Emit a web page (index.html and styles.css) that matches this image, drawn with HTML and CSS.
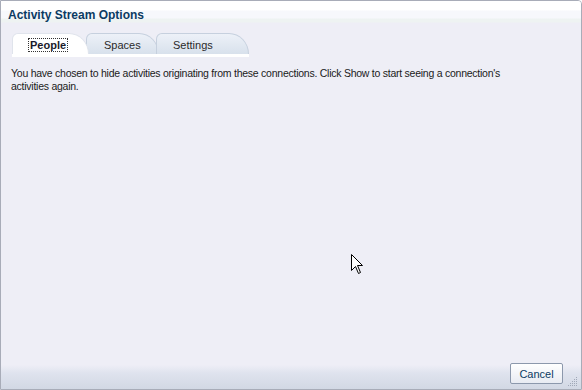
FILE: index.html
```html
<!DOCTYPE html>
<html lang="en">
<head>
    <meta charset="UTF-8">
    <title>Activity Stream Options</title>
    <link rel="stylesheet" href="styles.css">
</head>
<body>

<div class="dialog">
    <header class="title-bar">
        <span>Activity Stream Options</span>
    </header>

    <main class="content">
        <nav class="tabs">
            <div class="tab active people"><span>People</span></div>
            <div class="tab spaces">Spaces</div>
            <div class="tab settings">Settings</div>
        </nav>
        <p class="message">You have chosen to hide activities originating from these connections. Click Show to start seeing a connection's activities again.</p>
    </main>

    <footer class="button-bar">
        <button class="btn">Cancel</button>
        <svg class="grip" width="10" height="10" viewBox="0 0 10 10">
            <rect x="8" y="0" width="1" height="1" fill="#a0a8b8"/>
            <rect x="6" y="2" width="1" height="1" fill="#a0a8b8"/>
            <rect x="8" y="2" width="1" height="1" fill="#a0a8b8"/>
            <rect x="4" y="4" width="1" height="1" fill="#a0a8b8"/>
            <rect x="6" y="4" width="1" height="1" fill="#a0a8b8"/>
            <rect x="8" y="4" width="1" height="1" fill="#a0a8b8"/>
            <rect x="2" y="6" width="1" height="1" fill="#a0a8b8"/>
            <rect x="4" y="6" width="1" height="1" fill="#a0a8b8"/>
            <rect x="6" y="6" width="1" height="1" fill="#a0a8b8"/>
            <rect x="8" y="6" width="1" height="1" fill="#a0a8b8"/>
            <rect x="0" y="8" width="1" height="1" fill="#a0a8b8"/>
            <rect x="2" y="8" width="1" height="1" fill="#a0a8b8"/>
            <rect x="4" y="8" width="1" height="1" fill="#a0a8b8"/>
            <rect x="6" y="8" width="1" height="1" fill="#a0a8b8"/>
            <rect x="8" y="8" width="1" height="1" fill="#a0a8b8"/>
        </svg>
    </footer>

    <!-- mouse pointer captured in the screenshot -->
    <svg class="cursor" width="13" height="21" viewBox="0 0 13 21">
        <path d="M0.5 0.5 L0.5 16.5 L4.5 12.5 L7.5 19.5 L9.5 18.5 L6.5 11.5 L11.5 11.5 Z" fill="#fff" stroke="#000" stroke-width="1"/>
    </svg>
</div>

</body>
</html>
```

FILE: styles.css
```css
body {
    margin: 0;
    padding: 0;
    background-color: #ffffff;
    font-family: "Liberation Sans", Arial, sans-serif;
    font-size: 11px;
}
.dialog {
    position: relative;
    width: 580px;
    height: 388px;
    border: 1px solid #a8acb8;
    border-top-right-radius: 4px;
    background-color: #eeeef6;
    display: flex;
    flex-direction: column;
    overflow: hidden;
}
.title-bar {
    height: 27px;
    display: flex;
    align-items: center;
    padding-left: 7px;
    background: linear-gradient(#ffffff 0, #ffffff 9px, #f7f8fc 10px, #f7f8fc 17px, #eef3f2 18px, #eef3f2 21px, #eeeef6 22px);
    color: #0b3b63;
    font-weight: bold;
    font-size: 12px;
}
.content {
    flex: 1;
    padding: 5px 0 0 11px;
}
.tabs {
    display: flex;
    width: 237px;
    height: 21px;
    border-bottom: 3px solid #ffffff;
}
.tab {
    position: relative;
    height: 21px;
    line-height: 22px;
    color: #2a2a2a;
    background: linear-gradient(#edf1f8, #d8e1ec);
    border-top-left-radius: 6px;
    border-top-right-radius: 20px 21px;
    border: 1px solid #c6d0de;
    border-bottom: none;
    box-sizing: border-box;
    margin-right: -3px;
}
.tab.people {
    width: 77px;
    padding-left: 16px;
}
.tab.spaces {
    width: 73px;
    padding-left: 17px;
}
.tab.settings {
    width: 93px;
    padding-left: 16px;
}
.tab.active {
    background: #ffffff;
    border-color: #e0e4ec;
    font-weight: bold;
    color: #1a1a2a;
    z-index: 1;
}
.tab.active span {
    outline: 1px dotted #333;
    padding: 0 1px;
}
.message {
    margin: 10px 0 0 -1px;
    width: 490px;
    line-height: 13px;
    font-size: 10.5px;
    letter-spacing: -0.25px;
    color: #1a1a1a;
}
.button-bar {
    height: 24px;
    display: flex;
    align-items: flex-start;
    justify-content: flex-end;
    padding-right: 3px;
    background: linear-gradient(#eeeef6 0, #dfe3ee 8px, #d2d8e4 24px);
}
.btn {
    width: 53px;
    height: 21px;
    margin-top: -2px;
    font-family: "Liberation Sans", Arial, sans-serif;
    font-size: 11px;
    color: #0b3b63;
    background: linear-gradient(#ffffff, #e8ebf2);
    border: 1px solid #8c98ac;
    border-radius: 2px;
}
.grip {
    align-self: flex-end;
    margin: 0 0 2px 5px;
}
.cursor {
    position: absolute;
    left: 350px;
    top: 253px;
}
```
